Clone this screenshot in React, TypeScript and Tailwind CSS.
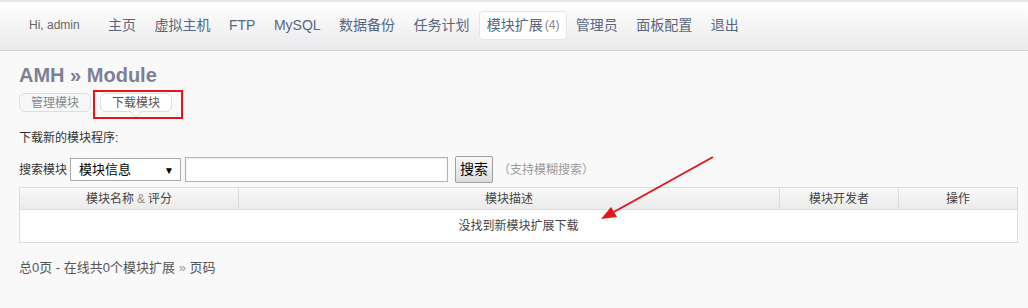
const font = { fontFamily: '"Liberation Sans", Arial, "Noto Sans CJK SC", sans-serif' };

const navItems = ["主页", "虚拟主机", "FTP", "MySQL", "数据备份", "任务计划"];
const navTail = ["管理员", "面板配置", "退出"];

function TopNav() {
  return (
    <div className="h-[51px] border-t-2 border-b border-t-[#e6e6e6] border-b-[#d6d6d6] bg-gradient-to-b from-white to-[#eaeaec]">
      <div className="flex h-full items-center pl-[29px] pb-[2px]">
        <span className="mr-[19px] text-[12px] text-[#666]">Hi, admin</span>
        {navItems.map((t) => (
          <span key={t} className="px-[9.25px] text-[14px] text-[#566682]">
            {t}
          </span>
        ))}
        <span className="flex h-[29px] items-center rounded-[4px] border border-[#e6e6e6] bg-white pl-[7px] pr-[6px] text-[14px] text-[#566682]">
          模块扩展<span className="ml-[2px] text-[12px] text-[#888]">(4)</span>
        </span>
        {navTail.map((t) => (
          <span key={t} className="px-[9.25px] text-[14px] text-[#566682]">
            {t}
          </span>
        ))}
      </div>
    </div>
  );
}

function SubTabs() {
  return (
    <div className="relative mt-[6px] flex gap-[9px]">
      <span className="flex h-[19px] items-center rounded-[6px] border border-[#dedede] bg-[#f7f7f7] px-[11px] text-[12px] text-[#888]">
        管理模块
      </span>
      <span className="relative flex h-[19px] items-center rounded-[6px] border border-[#dedede] bg-white px-[11px] text-[12px] text-[#555]">
        下载模块
        <span className="absolute -bottom-[5px] left-1/2 h-[8px] w-[8px] -translate-x-1/2 rotate-45 border-b border-r border-[#dedede] bg-white" />
      </span>
      {/* red annotation box */}
      <span className="pointer-events-none absolute -top-[3px] left-[74px] h-[29px] w-[90px] border-2 border-[#e4151b]" />
    </div>
  );
}

function SearchRow() {
  return (
    <div className="mt-[9px] flex items-center text-[12px] text-[#333]">
      <span className="mr-[3px]">搜索模块</span>
      <div className="relative flex h-[23px] w-[111px] items-center border border-[#a9a9a9] bg-white pl-[8px] text-[13px] text-black">
        模块信息
        <span className="absolute right-[6px] top-[4px] text-[10px]">▼</span>
      </div>
      <div className="ml-[4px] h-[25px] w-[263px] border border-[#aab2bd] bg-white shadow-[inset_0_1px_2px_rgba(0,0,0,0.08)]" />
      <button className="ml-[7px] h-[27px] w-[38px] rounded-[2px] border border-[#a0a0a0] bg-gradient-to-b from-[#fafafa] to-[#dcdcdc] text-[14px] text-black">
        搜索
      </button>
      <span className="ml-[5px] text-[12px] text-[#999]">（支持模糊搜索）</span>
    </div>
  );
}

function ModuleTable() {
  return (
    <div className="mt-[4px] w-[999px] border border-[#dcdcdc] bg-white text-[12px] text-[#444]">
      <div className="grid h-[22px] grid-cols-[219px_541px_119px_1fr] border-b border-[#dcdcdc] bg-gradient-to-b from-[#f8f8f8] to-[#ebebeb]">
        <div className="flex items-center justify-center border-r border-[#dcdcdc]">
          模块名称 <span className="mx-[3px] text-[#998877]">&amp;</span> 评分
        </div>
        <div className="flex items-center justify-center border-r border-[#dcdcdc]">模块描述</div>
        <div className="flex items-center justify-center border-r border-[#dcdcdc]">模块开发者</div>
        <div className="flex items-center justify-center">操作</div>
      </div>
      <div className="flex h-[32px] items-center justify-center">没找到新模块扩展下载</div>
    </div>
  );
}

function Arrow() {
  return (
    <svg className="pointer-events-none absolute left-0 top-0" width="1028" height="308">
      <line x1="713" y1="157" x2="612" y2="213" stroke="#e4151b" strokeWidth="2" />
      <polygon points="601,219 611,207 617,217" fill="#e4151b" />
    </svg>
  );
}

export default function App() {
  return (
    <div className="relative h-[308px] w-[1028px] overflow-hidden bg-[#f9f9fa]" style={font}>
      <TopNav />
      <div className="px-[19px]">
        <h1 className="mt-[12px] text-[20px] font-bold leading-[24px] text-[#7c8194]">AMH » Module</h1>
        <SubTabs />
        <p className="mt-[17px] text-[12px] text-[#333]">下载新的模块程序:</p>
        <SearchRow />
        <ModuleTable />
        <p className="mt-[15px] text-[13px] text-[#555]">
          总0页 - 在线共0个模块扩展 <span className="text-[#999]">»</span> 页码
        </p>
      </div>
      <Arrow />
    </div>
  );
}
